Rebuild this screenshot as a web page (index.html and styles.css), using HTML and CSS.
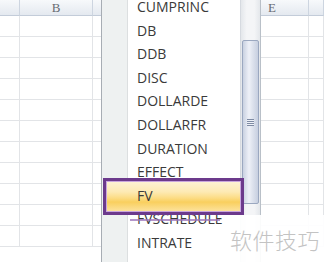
FILE: index.html
```html
<!DOCTYPE html>
<html lang="zh">
<head>
    <meta charset="UTF-8">
    <meta name="viewport" content="width=device-width, initial-scale=1.0">
    <title>FV</title>
    <link rel="stylesheet" href="styles.css">
</head>
<body>
    <div class="sheet">
        <div class="row head">
            <div class="cell"></div>
            <div class="cell">B</div>
            <div class="cell"></div>
            <div class="cell">E</div>
            <div class="cell"></div>
        </div>
        <div class="row"><div class="cell"></div><div class="cell"></div><div class="cell"></div><div class="cell"></div><div class="cell"></div></div>
        <div class="row"><div class="cell"></div><div class="cell"></div><div class="cell"></div><div class="cell"></div><div class="cell"></div></div>
        <div class="row"><div class="cell"></div><div class="cell"></div><div class="cell"></div><div class="cell"></div><div class="cell"></div></div>
        <div class="row"><div class="cell"></div><div class="cell"></div><div class="cell"></div><div class="cell"></div><div class="cell"></div></div>
        <div class="row"><div class="cell"></div><div class="cell"></div><div class="cell"></div><div class="cell"></div><div class="cell"></div></div>
        <div class="row"><div class="cell"></div><div class="cell"></div><div class="cell"></div><div class="cell"></div><div class="cell"></div></div>
        <div class="row"><div class="cell"></div><div class="cell"></div><div class="cell"></div><div class="cell"></div><div class="cell"></div></div>
        <div class="row"><div class="cell"></div><div class="cell"></div><div class="cell"></div><div class="cell"></div><div class="cell"></div></div>
        <div class="row"><div class="cell"></div><div class="cell"></div><div class="cell"></div><div class="cell"></div><div class="cell"></div></div>
        <div class="row"><div class="cell"></div><div class="cell"></div><div class="cell"></div><div class="cell"></div><div class="cell"></div></div>
        <div class="row"><div class="cell"></div><div class="cell"></div><div class="cell"></div><div class="cell"></div><div class="cell"></div></div>
    </div>

    <!-- lista de funciones (autocompletar) -->
    <div class="dropdown">
        <ul class="list">
            <li class="item">CUMPRINC</li>
            <li class="item">DB</li>
            <li class="item">DDB</li>
            <li class="item">DISC</li>
            <li class="item">DOLLARDE</li>
            <li class="item">DOLLARFR</li>
            <li class="item">DURATION</li>
            <li class="item">EFFECT</li>
            <li class="item active">FV</li>
            <li class="item">FVSCHEDULE</li>
            <li class="item">INTRATE</li>
        </ul>
        <div class="scroll">
            <div class="thumb"><span class="grip"></span></div>
        </div>
    </div>

    <div class="watermark">软件技巧</div>
</body>
</html>
```

FILE: styles.css
```css
html, body {
    height: 100%;
}
body {
    margin: 0;
    position: relative;
    overflow: hidden;
    background: #fff;
    font-family: 'Open Sans', 'Noto Sans', Arial, sans-serif;
    color: #333;
}

/* Hoja de cálculo */
.sheet {
    display: flex;
    flex-direction: column;
}
.row {
    display: grid;
    grid-template-columns: 20px 73px 143px 73px 1fr;
    height: 21px;
}
.cell {
    box-sizing: border-box;
    border-right: 1px solid #e2e4e7;
    border-bottom: 1px solid #e2e4e7;
}
.row.head {
    height: 16px;
    background: linear-gradient(#f7f9fb, #e3e8ef);
}
.row.head .cell {
    border-right-color: #cdd5e0;
    border-bottom-color: #c3ccd9;
    font-size: 13px;
    line-height: 15px;
    text-align: center;
    color: #666b72;
    font-family: 'Liberation Serif', serif;
}

/* Desplegable */
.dropdown {
    position: absolute;
    left: 101px;
    top: 0;
    width: 160px;
    height: 262px;
    box-sizing: border-box;
    border-left: 1px solid #a7adb4;
    border-right: 1px solid #b9c0c8;
    display: flex;
    overflow: hidden;
    background: #fff;
}
.list {
    flex: 1;
    list-style: none;
    margin: -5px 0 0;
    padding: 0;
    background: linear-gradient(to right, #eef1f1 0 25px, #dcdfe0 25px 26px, #fff 26px);
}
.item {
    height: 23.6px;
    line-height: 23.6px;
    padding-left: 35px;
    font-size: 14px;
    color: #3a3a3a;
    white-space: nowrap;
}
.item.active {
    position: relative;
    z-index: 1;
}
/* Recuadro morado de la selección */
.item.active::before {
    content: "";
    position: absolute;
    z-index: -1;
    top: -6px;
    bottom: -8px;
    left: 1px;
    right: -4px;
    border: 3px solid #6c3a8c;
    box-shadow: inset 0 0 0 1px #c9a6de;
    background: linear-gradient(#fdf3d6 0%, #fdeab4 35%, #fcdc84 55%, #f9cf5e 68%, #fde4a2 100%);
}
.item.active::after {
    content: "";
    position: absolute;
    top: 35px;
    left: 28px;
    width: 90px;
    height: 2px;
    background: #9b72b8;
    opacity: 0.75;
}

/* Barra de desplazamiento */
.scroll {
    width: 20px;
    flex-shrink: 0;
    box-sizing: border-box;
    border-left: 1px solid #d6dae0;
    padding-top: 40px;
    background: linear-gradient(to right, #e4e7eb, #f4f5f7 30%, #f4f5f7 70%, #e4e7eb);
}
.thumb {
    height: 164px;
    margin: 0 1px;
    box-sizing: border-box;
    border: 1px solid #9ba8c0;
    border-radius: 2px;
    background: linear-gradient(to right, #c9d1e1, #eef1f8 40%, #e0e5ef 60%, #c7cfe0);
    display: flex;
    align-items: center;
    justify-content: center;
}
.grip {
    width: 7px;
    height: 7px;
    background: repeating-linear-gradient(#7e8ba4 0 1px, #eef1f7 1px 2px);
}

/* Marca de agua */
.watermark {
    position: absolute;
    left: 223px;
    top: 215px;
    right: 0;
    bottom: 0;
    padding: 9px 0 0 7px;
    background: rgba(255, 255, 255, 0.93);
    font-family: 'Noto Sans CJK SC', sans-serif;
    font-weight: 300;
    font-size: 22px;
    line-height: 30px;
    letter-spacing: 0.5px;
    color: #c3c3c3;
}
```
